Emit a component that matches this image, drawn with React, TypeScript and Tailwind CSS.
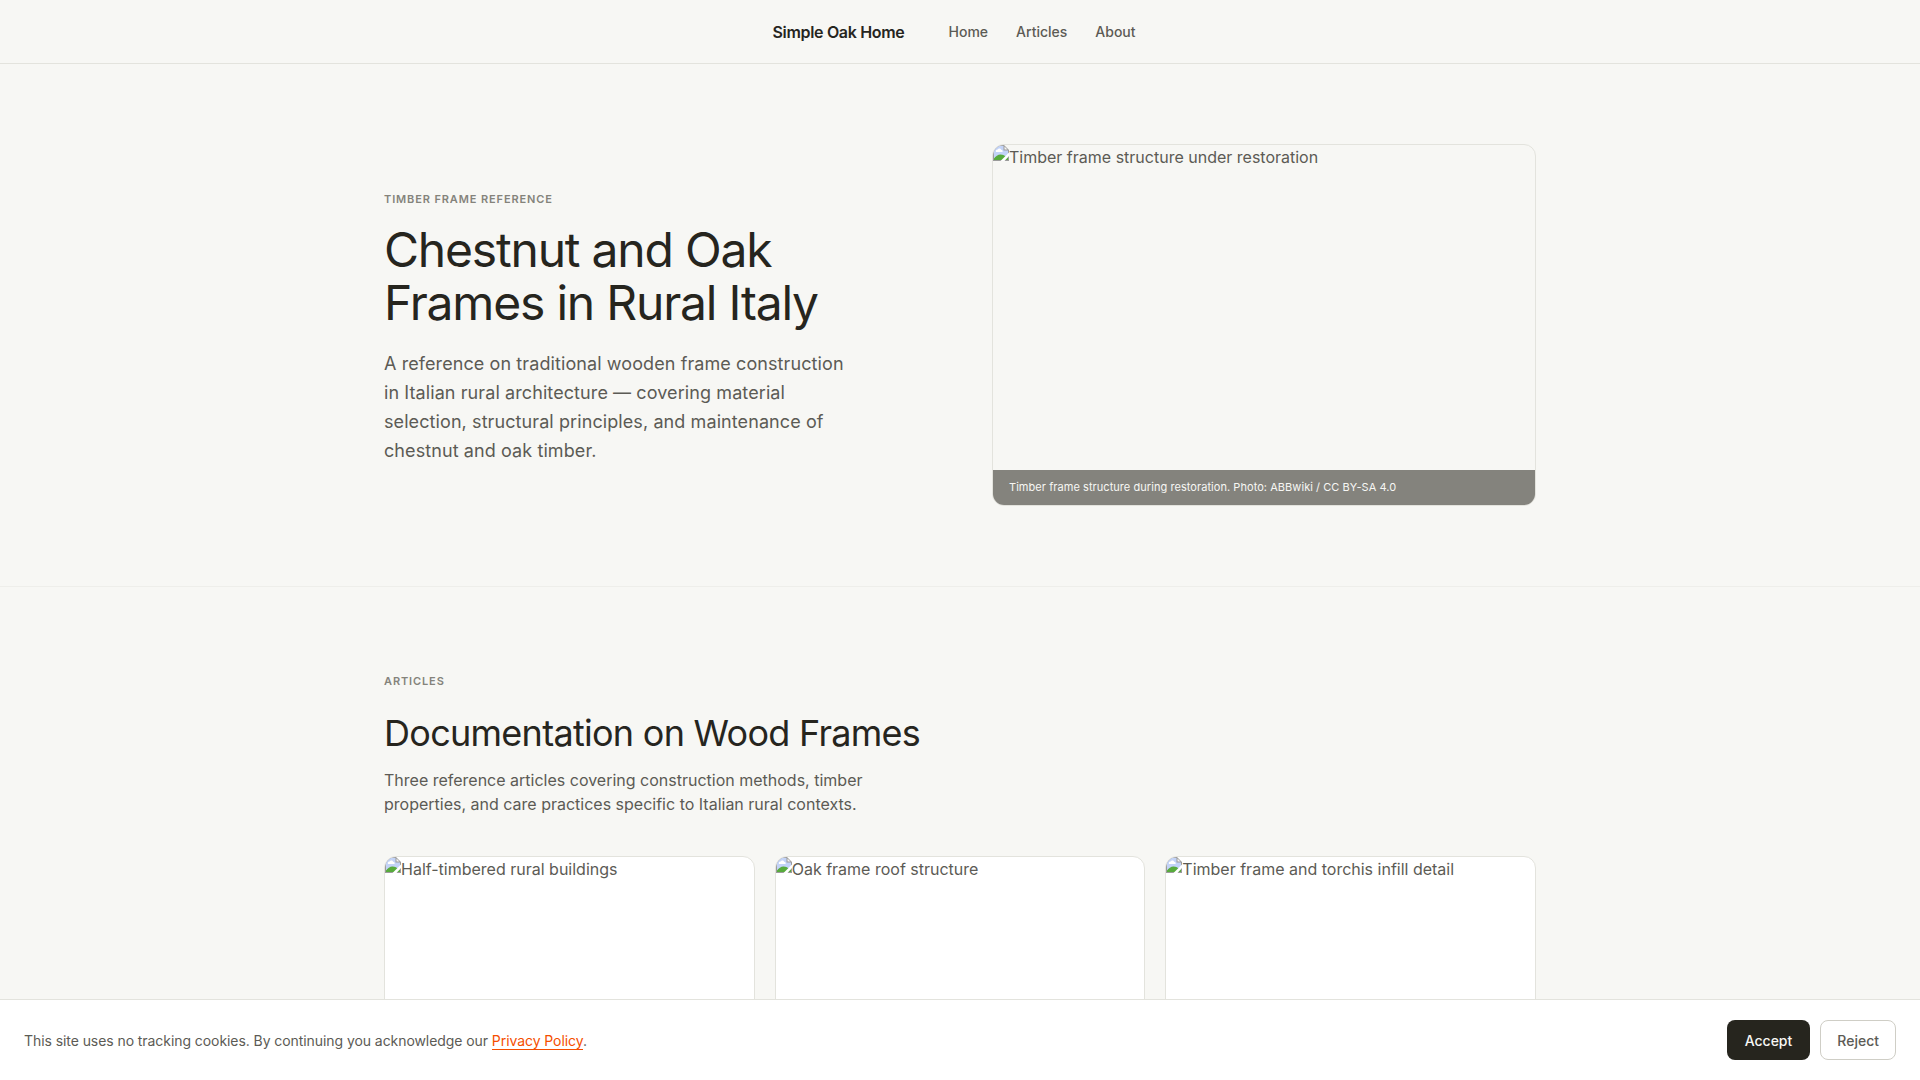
import React, { useState } from 'react'

const links = [
  { label: 'Home', href: '#home' },
  { label: 'Articles', href: '#articles' },
  { label: 'About', href: '#about' },
]

const articles = [
  { id: 'rural', alt: 'Half-timbered rural buildings' },
  { id: 'roof', alt: 'Oak frame roof structure' },
  { id: 'torchis', alt: 'Timber frame and torchis infill detail' },
]

function MissingImage({ alt }: { alt: string }) {
  return (
    <div className="flex items-start">
      <svg width="16" height="16" viewBox="0 0 16 16" className="shrink-0" aria-hidden="true">
        <path d="M0 0h11l5 5v11H0z" fill="#9b9b9b" />
        <path d="M1 1h9.500v4.500H15V15H1z" fill="#c3d3f7" />
        <path d="M3 7c-.6-1.500.5-2.600 1.700-2.400C5.300 3 7.700 3 8.100 4.700c1.300-.1 1.900 1.200 1.400 2.300z" fill="#fff" />
        <path d="M1 15v-1.500C2.500 11.500 5 9.500 7.500 9.500S11 10.500 12 11l3 1.500V15z" fill="#57ab3c" />
        <path d="M11.500 1.500V4.500h3z" fill="#f4f4f4" />
        <path d="M16 7.500v3.500L11.500 16H7.500z" fill="#fff" />
      </svg>
      <span className="leading-6">{alt}</span>
    </div>
  )
}

export default function App() {
  const [showCookies, setShowCookies] = useState(true)

  return (
    <div className="min-h-screen bg-[#f7f7f4] text-base leading-6 text-[#5c5b55] antialiased font-['Inter','Liberation_Sans',sans-serif]">
      <header className="border-b border-[#e3e3dd]">
        <nav className="flex h-[63px] items-center justify-center gap-8">
          <a href="#home" className="font-semibold tracking-[-0.02em] text-[#26251e]">Simple Oak Home</a>
          <ul className="flex gap-1 text-sm font-medium">
            {links.map((l) => (
              <li key={l.label}>
                <a href={l.href} className="px-3 py-2">{l.label}</a>
              </li>
            ))}
          </ul>
        </nav>
      </header>

      <main>
        <section className="border-b border-[#eeeeea] py-20">
          <div className="mx-auto grid max-w-[1200px] grid-cols-2 items-center gap-16 px-6">
            <div className="pt-1.5">
              <p className="mb-4 text-[11px] font-semibold uppercase leading-4 tracking-[0.08em] text-[#84837b]">Timber Frame Reference</p>
              <h1 className="mb-5 text-5xl leading-[53px] tracking-tight text-[#26251e]">Chestnut and Oak Frames in Rural Italy</h1>
              <p className="max-w-[470px] text-lg leading-[29px] tracking-[0.005em]">
                A reference on traditional wooden frame construction in Italian rural architecture — covering material selection, structural principles, and maintenance of chestnut and oak timber.
              </p>
            </div>
            <figure className="flex h-[362px] flex-col justify-between overflow-hidden rounded-xl border border-[#e3e3dd]">
              <MissingImage alt="Timber frame structure under restoration" />
              <figcaption className="bg-[#84837d] px-4 py-2 text-[11px] leading-[19px] tracking-[0.005em] text-[#f7f7f4]">
                Timber frame structure during restoration. Photo: ABBwiki / CC BY-SA 4.0
              </figcaption>
            </figure>
          </div>
        </section>

        <section className="py-20">
          <div className="mx-auto max-w-[1200px] px-6">
            <p className="mb-5 mt-1 text-[11px] font-semibold uppercase leading-5 tracking-[0.08em] text-[#84837b]">Articles</p>
            <h2 className="mb-3 text-4xl leading-[45px] tracking-[-0.02em] text-[#26251e]">Documentation on Wood Frames</h2>
            <p className="mb-10 max-w-[520px]">
              Three reference articles covering construction methods, timber properties, and care practices specific to Italian rural contexts.
            </p>
            <div className="grid grid-cols-3 gap-5">
              {articles.map((a) => (
                <article key={a.id} className="h-[320px] overflow-hidden rounded-xl border border-[#e3e3dd] bg-white">
                  <MissingImage alt={a.alt} />
                </article>
              ))}
            </div>
          </div>
        </section>
      </main>

      {showCookies && (
        <div className="fixed inset-x-0 bottom-0 flex items-center justify-between border-t border-[#e3e3dd] bg-white px-6 py-5">
          <p className="pt-0.5 text-sm tracking-[-0.005em]">
            This site uses no tracking cookies. By continuing you acknowledge our{' '}
            <a href="#privacy" className="border-b border-[#f54e00] text-[#f54e00]">Privacy Policy</a>.
          </p>
          <div className="flex gap-[10px] text-sm font-medium">
            <button onClick={() => setShowCookies(false)} className="h-10 rounded-lg bg-[#26251e] px-[18px] pt-0.5 text-[#f7f7f4]">Accept</button>
            <button onClick={() => setShowCookies(false)} className="h-10 rounded-lg border border-[#cfcec6] px-4 pt-0.5">Reject</button>
          </div>
        </div>
      )}
    </div>
  )
}
